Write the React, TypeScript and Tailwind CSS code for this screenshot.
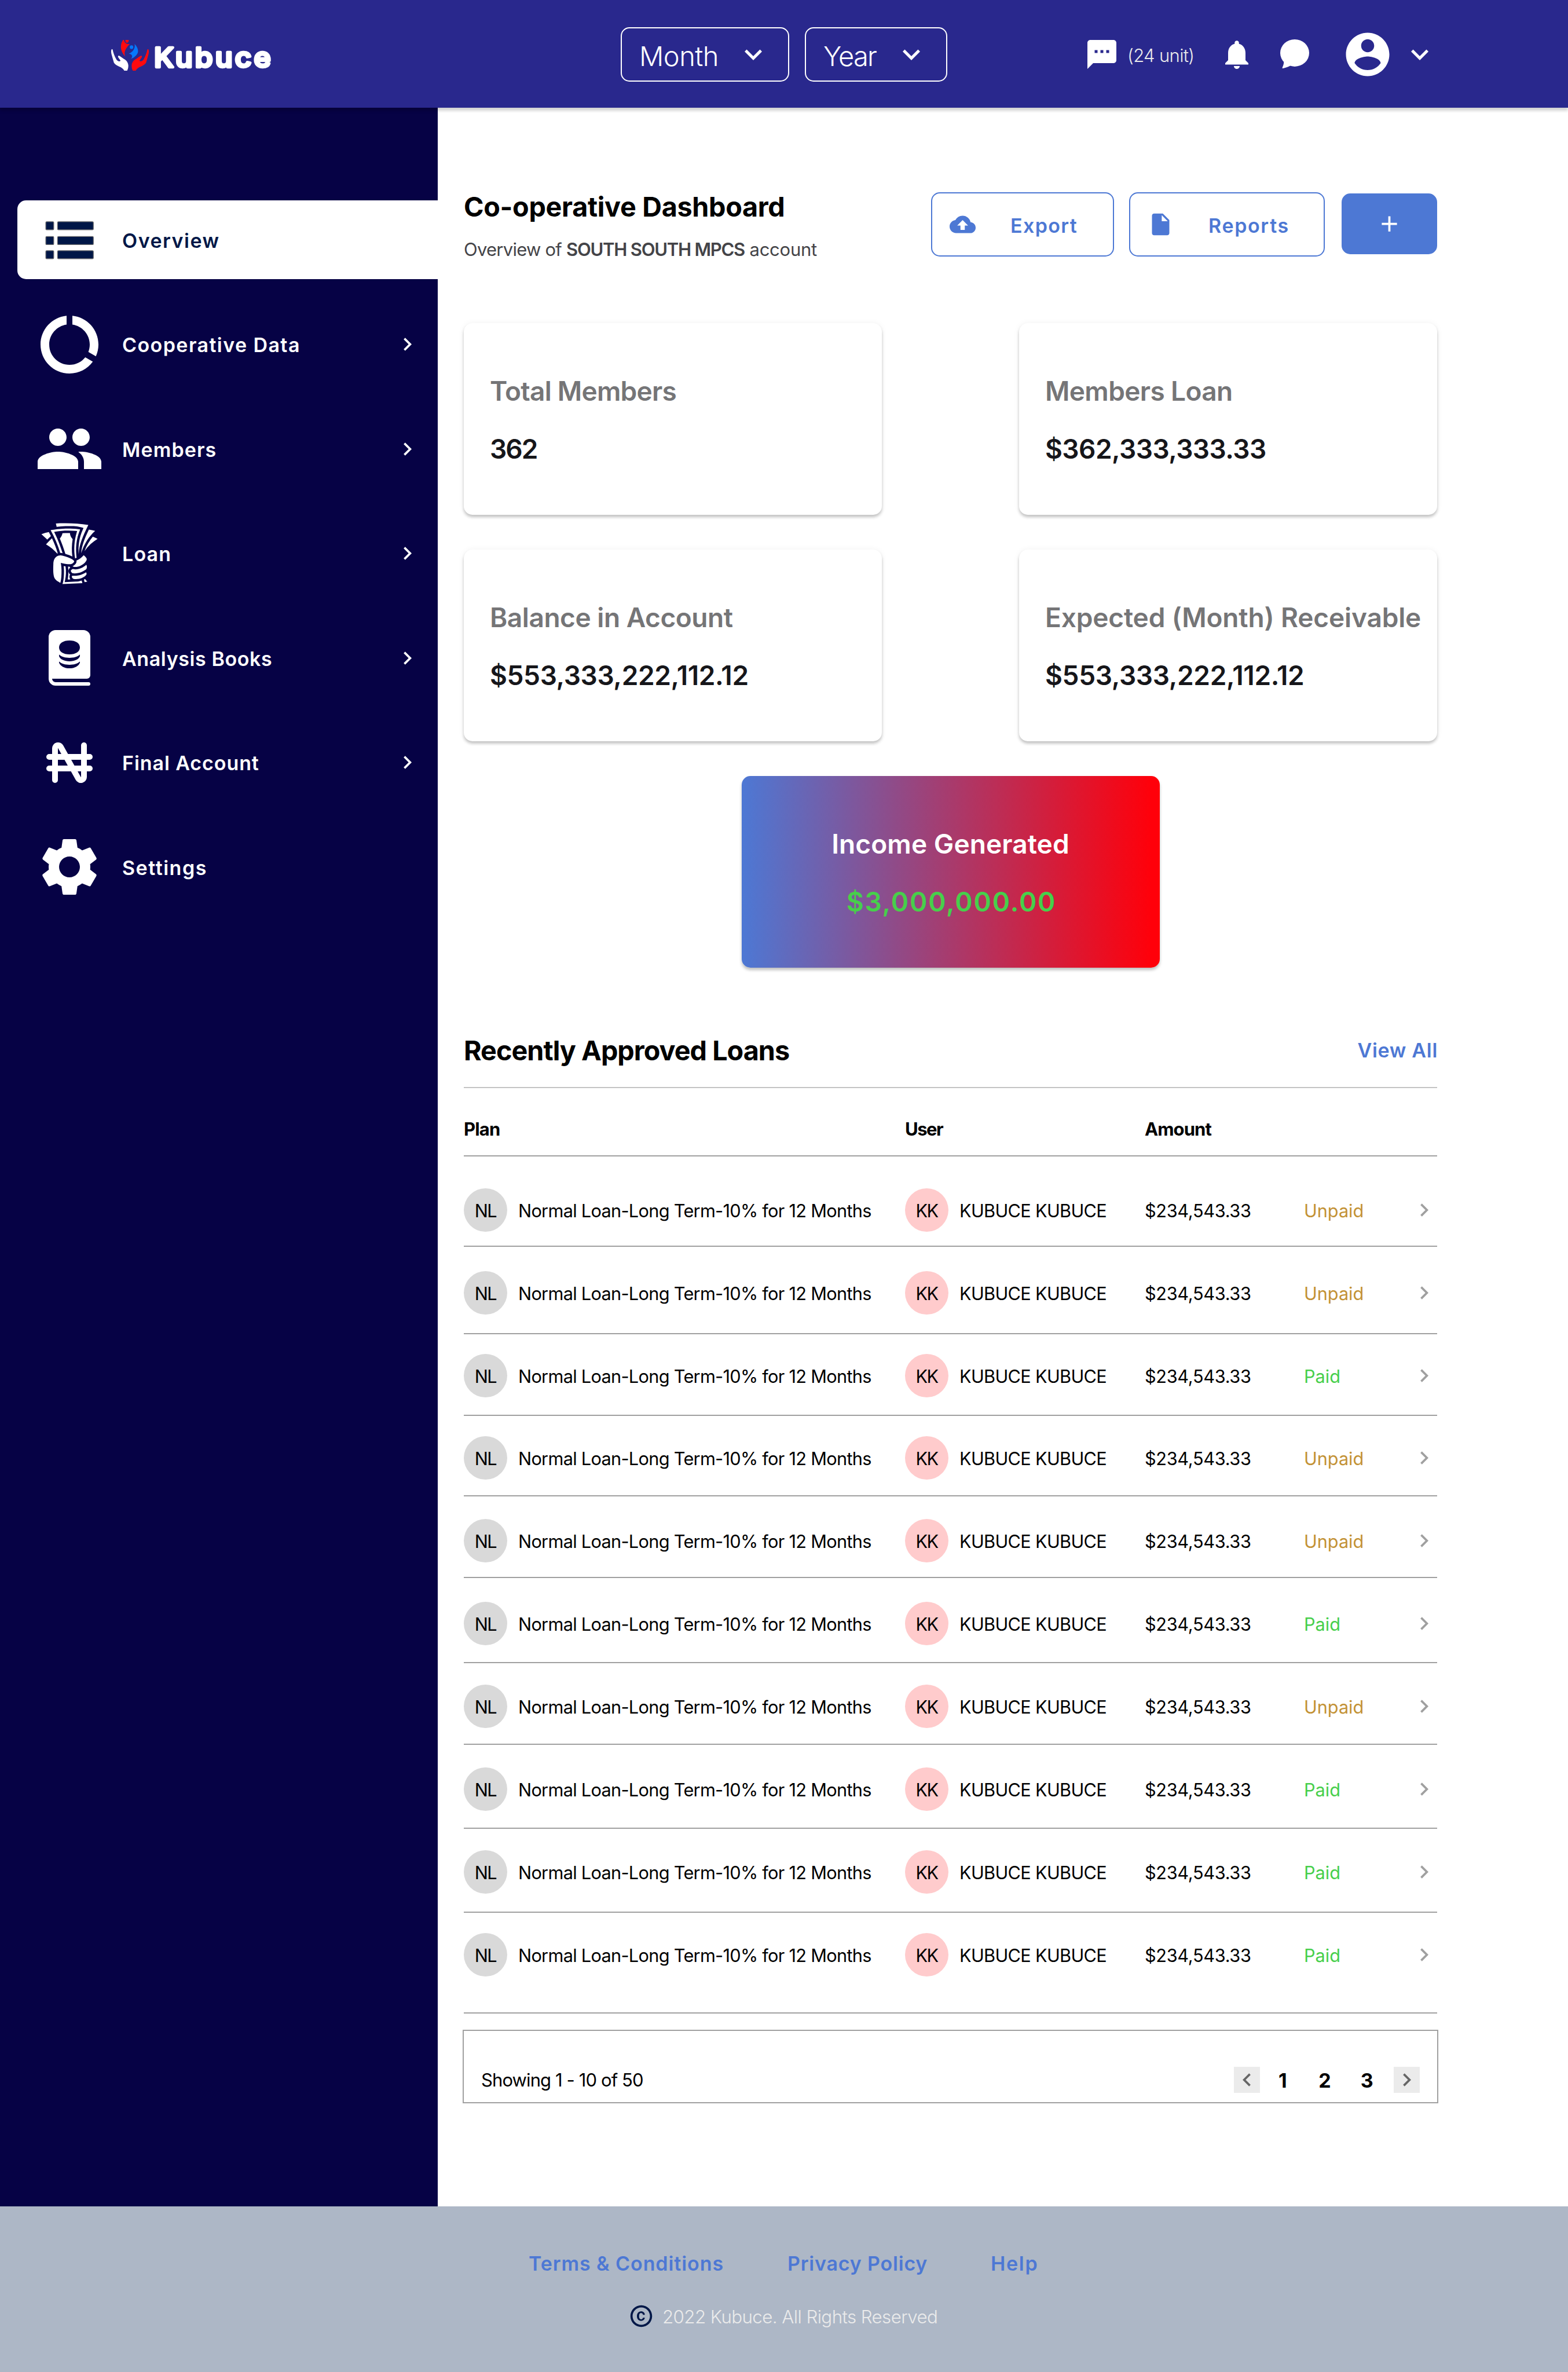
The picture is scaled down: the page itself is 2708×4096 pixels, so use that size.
import type { ReactNode } from "react";
import { GiTakeMyMoney } from "react-icons/gi";
import { MdSettings } from "react-icons/md";

type IconProps = { d: string; className: string };

function Icon({ d, className }: IconProps) {
  return (
    <svg viewBox="0 0 24 24" fill="currentColor" className={className}>
      <path d={d} />
    </svg>
  );
}

const paths = {
  chevronDown: "M16.59 8.59 12 13.17 7.41 8.59 6 10l6 6 6-6z",
  chevronRight: "M10 6 8.59 7.41 13.17 12l-4.58 4.59L10 18l6-6z",
  chevronLeft: "M15.41 7.41 14 6l-6 6 6 6 1.41-1.41L10.83 12z",
  sms: "M20 2H4c-1.1 0-1.99.9-1.99 2L2 22l4-4h14c1.1 0 2-.9 2-2V4c0-1.1-.9-2-2-2zM9 11H7V9h2v2zm4 0h-2V9h2v2zm4 0h-2V9h2v2z",
  bell: "M12 22c1.1 0 2-.9 2-2h-4c0 1.1.89 2 2 2zm6-6v-5c0-3.07-1.64-5.64-4.5-6.32V4c0-.83-.67-1.5-1.5-1.5s-1.5.67-1.5 1.5v.68C7.63 5.36 6 7.92 6 11v5l-2 2v1h16v-1l-2-2z",
  account:
    "M12 2C6.48 2 2 6.48 2 12s4.48 10 10 10 10-4.48 10-10S17.52 2 12 2zm0 3c1.66 0 3 1.34 3 3s-1.34 3-3 3-3-1.34-3-3 1.34-3 3-3zm0 14.2c-2.5 0-4.71-1.28-6-3.22.03-1.99 4-3.08 6-3.08 1.99 0 5.97 1.09 6 3.08-1.29 1.94-3.5 3.22-6 3.22z",
  dataUsage:
    "M13 2.05v3.03c3.39.49 6 3.39 6 6.92 0 .9-.18 1.75-.48 2.54l2.6 1.53c.56-1.24.88-2.62.88-4.07 0-5.18-3.95-9.45-9-9.95zM12 19c-3.87 0-7-3.13-7-7 0-3.53 2.61-6.43 6-6.92V2.05c-5.06.5-9 4.76-9 9.95 0 5.52 4.47 10 9.99 10 3.31 0 6.24-1.61 8.06-4.09l-2.6-1.53C16.17 17.98 14.21 19 12 19z",
  people:
    "M16 11c1.66 0 2.99-1.34 2.99-3S17.66 5 16 5c-1.66 0-3 1.34-3 3s1.34 3 3 3zm-8 0c1.66 0 2.99-1.34 2.99-3S9.66 5 8 5C6.34 5 5 6.34 5 8s1.34 3 3 3zm0 2c-2.33 0-7 1.17-7 3.5V19h14v-2.5c0-2.33-4.67-3.5-7-3.5zm8 0c-.29 0-.62.02-.97.05 1.16.84 1.97 1.97 1.97 3.45V19h6v-2.5c0-2.33-4.67-3.5-7-3.5z",
  cloudUpload:
    "M19.35 10.04C18.67 6.59 15.64 4 12 4 9.11 4 6.6 5.64 5.35 8.04 2.34 8.36 0 10.91 0 14c0 3.31 2.69 6 6 6h13c2.76 0 5-2.24 5-5 0-2.64-2.05-4.78-4.65-4.96zM14 13v4h-4v-4H7l5-5 5 5h-3z",
  file: "M6 2c-1.1 0-1.99.9-1.99 2L4 20c0 1.1.89 2 1.99 2H18c1.1 0 2-.9 2-2V8l-6-6H6zm7 7V3.5L18.5 9H13z",
  plus: "M19 13h-6v6h-2v-6H5v-2h6V5h2v6h6v2z",
  copyright:
    "M10.08 10.86c.05-.33.16-.62.3-.87s.34-.46.59-.62c.24-.15.54-.22.91-.23.23.01.44.05.63.13.2.09.38.21.52.36s.25.33.34.53.13.42.14.64h1.79c-.02-.47-.11-.9-.28-1.29s-.4-.73-.7-1.01-.66-.5-1.08-.66-.88-.23-1.39-.23c-.65 0-1.22.11-1.7.34s-.88.53-1.2.92-.56.84-.71 1.36S8 11.29 8 11.87v.27c0 .58.08 1.12.23 1.64s.39.97.71 1.35.72.69 1.2.91 1.05.34 1.7.34c.47 0 .91-.08 1.32-.23s.77-.36 1.08-.63.56-.58.74-.94.29-.74.3-1.15h-1.79c-.01.21-.06.4-.15.58s-.21.33-.36.46-.32.23-.52.3c-.19.07-.39.09-.6.1-.36-.01-.66-.08-.89-.23-.25-.16-.45-.37-.59-.62s-.25-.55-.3-.88-.08-.67-.08-1v-.27c0-.35.03-.68.08-1.01zM12 2C6.48 2 2 6.48 2 12s4.48 10 10 10 10-4.48 10-10S17.52 2 12 2zm0 18c-4.41 0-8-3.59-8-8s3.59-8 8-8 8 3.59 8 8-3.59 8-8 8z",
};

function Logo() {
  const hand =
    "M129 408C124 415 124 430 127 450L142 520C148 535 160 542 175 552C190 560 200 570 206 585H224C228 575 232 560 231 540C229 515 218 500 205 490L175 463C168 460 165 468 170 478L183 503C180 512 165 510 158 495C145 465 138 440 134 412Z";
  return (
    <div className="flex w-[881px] items-center">
      <svg viewBox="125 333 233 252" preserveAspectRatio="none" className="mt-[3px] h-[53px] w-[65px]">
        <path d={hand} fill="#fff" />
        <path d={hand} fill="#ff0a0e" transform="translate(483 0) scale(-1 1)" />
        <path
          fill="#ff0a0e"
          d="M198 333C185 360 183 390 188 415C193 438 202 455 212 468C203 440 208 410 240 366C222 368 207 360 204 333ZM213 333H234C234 347 230 355 223 356C215 355 212 346 213 333Z"
        />
        <ellipse cx="251" cy="392" rx="11" ry="15" fill="#0578fb" />
        <path fill="#0578fb" d="M270 366C285 385 293 410 291 430C288 455 268 478 247 488C258 475 260 450 234 446C262 430 275 400 270 366Z" />
      </svg>
      <svg viewBox="0 0 222 60" className="mt-[11px] ml-[5px] h-[60px] w-[222px]">
        <text
          x="4"
          y="45.5"
          textLength="206"
          lengthAdjust="spacingAndGlyphs"
          stroke="#fff"
          strokeWidth="4.5"
          strokeLinejoin="round"
          className="fill-white font-['Inter',sans-serif] text-[47px] font-medium tracking-[4px]"
        >
          Kubuce
        </text>
      </svg>
    </div>
  );
}

function Picker({ label, className }: { label: string; className: string }) {
  return (
    <div className={`flex h-[94px] items-center justify-between rounded-[15px] border-2 border-white px-[30px] ${className}`}>
      <span className="pt-1 text-[47px] leading-none font-light">{label}</span>
      <Icon d={paths.chevronDown} className="size-[60px]" />
    </div>
  );
}

function Header() {
  return (
    <header className="relative z-10 flex h-[186px] items-center bg-[#29288d] pt-[2px] pl-[192px] text-white shadow-[0_5px_5px_rgba(0,0,0,0.18)]">
      <Logo />
      <Picker label="Month" className="-ml-px w-[291px] tracking-[-0.5px]" />
      <Picker label="Year" className="ml-[27px] w-[246px] tracking-[-1.7px]" />
      <Icon d={paths.sms} className="ml-[237px] size-[60px]" />
      <span className="w-[173px] pt-0.5 pl-[14px] text-[31px] leading-none font-light tracking-[-0.65px] whitespace-nowrap text-[#ebebeb]">(24 unit)</span>
      <Icon d={paths.bell} className="size-[60px]" />
      <svg viewBox="0 0 80 80" fill="currentColor" className="-mt-[2px] ml-[45px] size-[50px]">
        <ellipse cx="40" cy="37.5" rx="40" ry="37.5" />
        <path d="M10 60C10.500 68 7.500 74 5.800 78.500C5.500 80.200 6.500 80.300 8 79.800C16 78 22 76.500 29 72Z" />
      </svg>
      <Icon d={paths.account} className="ml-[56px] size-[90px]" />
      <Icon d={paths.chevronDown} className="ml-[15px] size-[60px]" />
    </header>
  );
}

const listIcon = (
  <svg viewBox="0 0 192 192" className="size-[120px]" fill="#001747" stroke="#6f6f6f" strokeWidth="2">
    {[46, 87, 126].map((y) => (
      <g key={y}>
        <rect x="30.500" y={y} width="22" height="22.500" rx="2.500" />
        <rect x="63" y={y} width="99" height="22.500" rx="2.500" />
      </g>
    ))}
  </svg>
);

const bookIcon = (
  <svg viewBox="0 0 20 20" fill="currentColor" className="size-[120px]">
    <path
      fillRule="evenodd"
      d="M4 4a2 2 0 0 1 2-2h8a2 2 0 0 1 2 2v11a1 1 0 0 1-1 1H5a1 1 0 0 0 1 1h9.500a.5.5 0 0 1 0 1H6a2 2 0 0 1-2-2V4zM10 9c1.800 0 3-.8 3-2s-1.200-2-3-2-3 .8-3 2 1.200 2 3 2zM7 9.050v.55C7.400 10.450 8.500 11 10 11s2.600-.55 3-1.400v-.55C12.370 9.680 11.230 10 10 10s-2.370-.32-3-.95zM7 11.050v.35C7.400 12.350 8.500 13 10 13s2.600-.65 3-1.600v-.35C12.370 11.680 11.230 12 10 12s-2.370-.32-3-.95z"
    />
  </svg>
);

const nairaIcon = (
  <svg viewBox="0 0 24 24" fill="none" stroke="currentColor" strokeWidth="2" strokeLinecap="round" strokeLinejoin="round" className="size-[120px]">
    <path d="M7 18V7.052a1.050 1.050 0 0 1 1.968-.51l6.064 10.916a1.050 1.050 0 0 0 1.968-.51V6M5 10h14M5 14h14" />
  </svg>
);

const navItems: { label: string; icon: ReactNode; tracking: string; arrow: boolean }[] = [
  { label: "Cooperative Data", icon: <Icon d={paths.dataUsage} className="size-[120px]" />, tracking: "tracking-[1.42px]", arrow: true },
  { label: "Members", icon: <Icon d={paths.people} className="size-[120px]" />, tracking: "tracking-[1.12px]", arrow: true },
  { label: "Loan", icon: <GiTakeMyMoney className="size-[120px]" />, tracking: "tracking-[1.17px]", arrow: true },
  { label: "Analysis Books", icon: bookIcon, tracking: "tracking-[0.6px]", arrow: true },
  { label: "Final Account", icon: nairaIcon, tracking: "tracking-[0.92px]", arrow: true },
  { label: "Settings", icon: <MdSettings className="size-[120px]" />, tracking: "tracking-[1.51px]", arrow: false },
];

function Sidebar() {
  return (
    <nav className="flex w-[756px] shrink-0 flex-col gap-[44.500px] bg-[#060245] pt-[160px] pl-[30px] text-[34px] leading-none font-semibold text-white">
      <div className="flex h-[136px] items-center rounded-l-[15px] bg-white pl-[30px] text-[#001747]">
        {listIcon}
        <span className="pt-[3px] pl-[31px] tracking-[1.5px]">Overview</span>
      </div>
      {navItems.map((item) => (
        <div key={item.label} className="flex h-[136px] items-center px-[30px]">
          {item.icon}
          <span className={`flex-1 pt-[3px] pl-[31px] ${item.tracking}`}>{item.label}</span>
          {item.arrow && <Icon d={paths.chevronRight} className="size-[45px]" />}
        </div>
      ))}
    </nav>
  );
}

function StatCard({ title, value, titleClass, valueClass }: { title: string; value: string; titleClass: string; valueClass: string }) {
  return (
    <div className="h-[331px] w-[722px] rounded-[15px] bg-white pt-[89px] pl-[45px] text-[46px] leading-[56px] font-semibold whitespace-nowrap shadow-[0_4px_5px_rgba(0,0,0,0.22),0_0_12px_rgba(0,0,0,0.05)]">
      <div className={`text-[#757577] ${titleClass}`}>{title}</div>
      <div className={`mt-[44px] text-[#16161a] ${valueClass}`}>{value}</div>
    </div>
  );
}

const loans = [
  { paid: false, row: "h-[156px] pt-[55px]" },
  { paid: false, row: "h-[151px] pt-[42px]" },
  { paid: true, row: "h-[141px] pt-[34px]" },
  { paid: false, row: "h-[139px] pt-[35px]" },
  { paid: false, row: "h-[141px] pt-[39px]" },
  { paid: true, row: "h-[147px] pt-[41px]" },
  { paid: false, row: "h-[141px] pt-[37px]" },
  { paid: true, row: "h-[145px] pt-[39px]" },
  { paid: true, row: "h-[145px] pt-[37px]" },
  { paid: true, row: "h-[174px] pt-[35px]" },
];

const columns = "grid grid-cols-[762px_414px_275px_185px_45px] whitespace-nowrap";

function Avatar({ initials, className }: { initials: string; className: string }) {
  return <div className={`flex size-[75px] items-center justify-center rounded-full pt-[3px] ${className}`}>{initials}</div>;
}

function LoanTable() {
  return (
    <section>
      <div className="flex h-[95px] items-start justify-between border-b-2 border-[#c4c4c4] leading-[60px]">
        <h2 className="text-[46.700px] font-bold tracking-[-0.97px]">Recently Approved Loans</h2>
        <a className="-mr-px text-[34px] font-semibold tracking-[0.7px] text-[#4d78d4]">View All</a>
      </div>
      <div className={`${columns} h-[118px] border-b-2 border-[#a0a0a0] pt-[51px] text-[31px] leading-[40px] font-bold`}>
        <span className="tracking-[-0.83px]">Plan</span>
        <span className="tracking-[-1.5px]">User</span>
        <span className="tracking-[-0.93px]">Amount</span>
      </div>
      {loans.map((loan, i) => (
        <div key={i} className={`${columns} items-start border-b-2 border-[#a0a0a0] text-[30.700px] leading-[38px] ${loan.row}`}>
          <div className="flex items-center gap-[19px]">
            <Avatar initials="NL" className="bg-[#d9d9d9] tracking-[-1.5px]" />
            <span className="pt-0.5 tracking-[-0.7px]">Normal Loan-Long Term-10% for 12 Months</span>
          </div>
          <div className="flex items-center gap-[19px]">
            <Avatar initials="KK" className="bg-[#ffcbcc] tracking-[-1.5px]" />
            <span className="pt-0.5 tracking-[-0.7px]">KUBUCE KUBUCE</span>
          </div>
          <span className="pt-[19.500px] tracking-[-0.33px]">$234,543.33</span>
          {loan.paid ? (
            <span className="pt-[19.500px] text-[#47cf4b]">Paid</span>
          ) : (
            <span className="pt-[19.500px] tracking-[-0.05px] text-[#c39235]">Unpaid</span>
          )}
          <Icon d={paths.chevronRight} className="mt-[15px] size-[45px] text-[#a0a0a0]" />
        </div>
      ))}
    </section>
  );
}

function Pagination() {
  return (
    <div className="-mx-[2px] mt-[28px] flex h-[127px] items-start border-2 border-[#a0a0a0] pt-[62px] pr-[30px] pl-[30px]">
      <span className="flex-1 text-[31px] leading-[46px] tracking-[-0.89px]">Showing 1 - 10 of 50</span>
      <span className="flex size-[45px] bg-[#ebebeb] text-[#666]">
        <Icon d={paths.chevronLeft} className="size-[45px]" />
      </span>
      <div className="grid w-[231px] grid-cols-3 pr-[10px] pl-[3px] text-center text-[34px] leading-[47px] font-bold">
        <span>1</span>
        <span>2</span>
        <span>3</span>
      </div>
      <span className="flex size-[45px] bg-[#ebebeb] text-[#666]">
        <Icon d={paths.chevronRight} className="size-[45px]" />
      </span>
    </div>
  );
}

function Main() {
  return (
    <main className="w-[1726px] pt-[143px] pl-[45px]">
      <div className="flex h-[121px] items-start">
        <div className="w-[807px] shrink-0 whitespace-nowrap">
          <h1 className="text-[46.700px] leading-[56px] font-bold tracking-[-0.3px]">Co-operative Dashboard</h1>
          <p className="mt-[27px] text-[31px] leading-[38px] text-[#444448]">
            <span className="tracking-[-0.75px]">Overview of </span>
            <span className="font-semibold tracking-[-1.25px]">SOUTH SOUTH MPCS</span>
            <span className="tracking-[-0.25px]"> account</span>
          </p>
        </div>
        <button className="mt-[3px] flex h-[111px] w-[316px] shrink-0 items-center rounded-[15px] border-2 border-[#4d78d4] pl-[30px] text-[34px] leading-none font-semibold tracking-[1.37px] text-[#4d78d4]">
          <Icon d={paths.cloudUpload} className="size-[45px]" />
          <span className="pt-1 pl-[60px]">Export</span>
        </button>
        <button className="mt-[3px] ml-[26px] flex h-[111px] w-[338px] shrink-0 items-center rounded-[15px] border-2 border-[#4d78d4] pl-[30px] text-[34px] leading-none font-semibold tracking-[1.65px] text-[#4d78d4]">
          <Icon d={paths.file} className="size-[45px]" />
          <span className="pt-1 pl-[60px]">Reports</span>
        </button>
        <button className="mt-[5px] ml-[29px] flex h-[105px] w-[165px] shrink-0 items-center justify-center rounded-[15px] bg-[#4d78d4] text-white">
          <Icon d={paths.plus} className="size-[45px]" />
        </button>
      </div>
      <div className="mt-[108px] grid grid-cols-[722px_722px] justify-between gap-y-[60px]">
        <StatCard title="Total Members" value="362" titleClass="tracking-[-0.75px]" valueClass="tracking-[-2px]" />
        <StatCard title="Members Loan" value="$362,333,333.33" titleClass="tracking-[-0.63px]" valueClass="tracking-[-0.56px]" />
        <StatCard title="Balance in Account" value="$553,333,222,112.12" titleClass="tracking-[-0.45px]" valueClass="tracking-[-0.38px]" />
        <StatCard title="Expected (Month) Receivable" value="$553,333,222,112.12" titleClass="tracking-[-0.15px]" valueClass="tracking-[-0.34px]" />
      </div>
      <div className="mx-auto mt-[60px] h-[331px] w-[722px] rounded-[15px] bg-linear-to-r/srgb from-[#4d78d4] to-[#ff000a] to-98% pt-[89px] text-center text-[46px] leading-[56px] font-semibold shadow-[0_4px_5px_rgba(0,0,0,0.25)]">
        <div className="tracking-[0.1px] text-white">Income Generated</div>
        <div className="mt-[44px] pl-[3px] tracking-[1.85px] text-[#47cf4b]">$3,000,000.00</div>
      </div>
      <div className="mt-[113px]">
        <LoanTable />
        <Pagination />
      </div>
    </main>
  );
}

function Footer() {
  return (
    <footer className="h-[286px] bg-[#adb7c6] pt-[77px]">
      <div className="grid grid-cols-[447px_351px_auto] pl-[913px] text-[34px] leading-[44px] font-semibold text-[#4d78d4]">
        <a className="tracking-[0.92px]">Terms &amp; Conditions</a>
        <a className="tracking-[0.8px]">Privacy Policy</a>
        <a className="tracking-[1.7px]">Help</a>
      </div>
      <div className="mt-[46px] flex items-center gap-[14px] pl-[1085px]">
        <Icon d={paths.copyright} className="size-[45px] text-[#001747]" />
        <span className="pt-0.5 text-[31.300px] leading-[38px] font-light tracking-[-0.59px] text-[#ebebeb]">2022 Kubuce. All Rights Reserved</span>
      </div>
    </footer>
  );
}

export default function App() {
  return (
    <div className="w-[2708px] bg-white font-['Inter',sans-serif] text-black">
      <Header />
      <div className="flex h-[3624px]">
        <Sidebar />
        <Main />
      </div>
      <Footer />
    </div>
  );
}
